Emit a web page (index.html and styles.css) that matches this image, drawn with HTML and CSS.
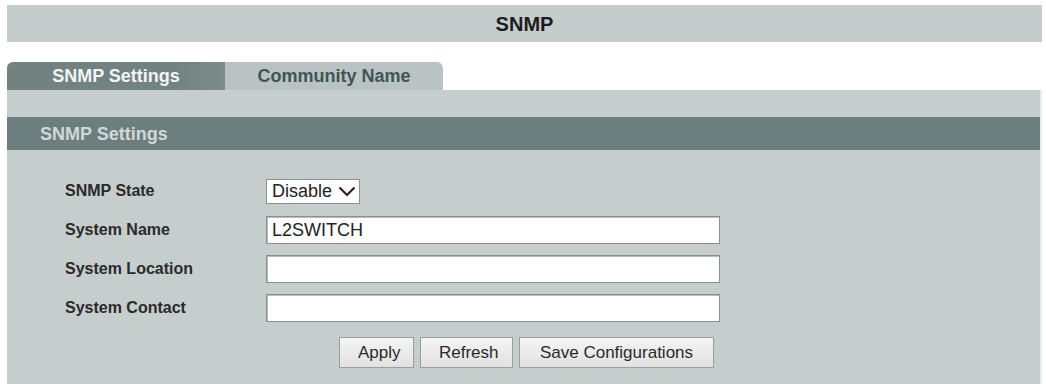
FILE: index.html
```html
<!DOCTYPE html>
<html lang="en">
<head>
    <meta charset="UTF-8">
    <meta name="viewport" content="width=device-width, initial-scale=1.0">
    <title>SNMP</title>
    <link rel="stylesheet" href="styles.css">
</head>
<body>
    <div class="title-bar">SNMP</div>

    <div class="tabs">
        <div class="tab active">SNMP Settings</div>
        <div class="tab">Community Name</div>
    </div>

    <div class="panel">
        <div class="panel-band"></div>
        <div class="section-bar">SNMP Settings</div>

        <form class="settings-form">
            <div class="form-grid">
                <label for="snmpState">SNMP State</label>
                <div>
                    <span class="select-wrap">
                        <select id="snmpState" name="snmpState">
                            <option value="disable">Disable</option>
                            <option value="enable">Enable</option>
                        </select>
                        <svg class="chevron" width="18" height="11" viewBox="0 0 18 11">
                            <path d="M1.5 1.5 L9 9 L16.5 1.5" fill="none" stroke="#222" stroke-width="2.2"/>
                        </svg>
                    </span>
                </div>

                <label for="sysName">System Name</label>
                <input type="text" id="sysName" name="sysName" value="L2SWITCH">

                <label for="sysLocation">System Location</label>
                <input type="text" id="sysLocation" name="sysLocation">

                <label for="sysContact">System Contact</label>
                <input type="text" id="sysContact" name="sysContact">
            </div>

            <div class="buttons">
                <button type="button" class="btn-apply">Apply</button>
                <button type="button" class="btn-refresh">Refresh</button>
                <button type="button" class="btn-save">Save Configurations</button>
            </div>
        </form>
    </div>
</body>
</html>
```

FILE: styles.css
```css
body {
    font-family: "Liberation Sans", Arial, sans-serif;
    background-color: #ffffff;
    margin: 0;
    padding: 5px 4px 0 7px;
    overflow: hidden;
}
.title-bar {
    background-color: #c4cccc;
    height: 37px;
    line-height: 38px;
    text-align: center;
    font-size: 20px;
    font-weight: bold;
    color: #1c1c1c;
}
.tabs {
    display: flex;
    margin-top: 20px;
    height: 28px;
}
.tab {
    width: 218px;
    text-align: center;
    font-size: 18px;
    font-weight: bold;
    line-height: 28px;
    background-color: #b9c3c3;
    color: #3f5556;
    border-radius: 0 6px 0 0;
}
.tab.active {
    background: linear-gradient(to right, #718281 75%, #7d8c8b);
    color: #f2f5f5;
    border-radius: 6px 0 0 0;
}
.panel {
    background-color: #c5cdcd;
    padding-bottom: 30px;
    border-right: 2px solid #e6eaea;
}
.panel-band {
    height: 27px;
}
.section-bar {
    background-color: #6c7e7d;
    height: 33px;
    line-height: 34px;
    padding-left: 33px;
    font-size: 18px;
    font-weight: bold;
    color: #d0d8d8;
}
.settings-form {
    padding-top: 22px;
}
.form-grid {
    display: grid;
    grid-template-columns: 201px 454px;
    grid-auto-rows: 38.8px;
    align-items: center;
    padding-left: 58px;
}
.form-grid label {
    font-size: 16px;
    font-weight: bold;
    color: #2a2a2a;
}
.select-wrap {
    position: relative;
    display: inline-block;
}
.select-wrap select {
    appearance: none;
    -webkit-appearance: none;
    width: 94px;
    height: 25px;
    padding: 0 0 0 5px;
    border: 1px solid #8d9393;
    border-radius: 0;
    background: #ffffff;
    font-family: "Liberation Sans", Arial, sans-serif;
    font-size: 18px;
    color: #222;
    display: block;
}
.chevron {
    position: absolute;
    right: 4px;
    top: 7px;
    pointer-events: none;
}
.form-grid input[type="text"] {
    width: 454px;
    height: 28px;
    padding: 0 5px;
    border: 1px solid #8a9090;
    box-shadow: inset 1px 1px 0 #b7bcbc;
    background: #ffffff;
    font-family: "Liberation Sans", Arial, sans-serif;
    font-size: 18px;
    color: #222;
    box-sizing: border-box;
}
.buttons {
    display: flex;
    justify-content: center;
    gap: 6px;
    margin-top: 10px;
    padding-left: 6px;
}
.buttons button {
    height: 31px;
    padding: 0 18px;
    background: linear-gradient(#f4f4f4, #e2e2e2);
    border: 1px solid #9c9f9f;
    border-radius: 0;
    font-family: "Liberation Sans", Arial, sans-serif;
    font-size: 17px;
    color: #2a2a2a;
    cursor: pointer;
}
.btn-apply {
    width: 75px;
}
.btn-refresh {
    width: 93px;
}
.btn-save {
    width: 195px;
}
```
